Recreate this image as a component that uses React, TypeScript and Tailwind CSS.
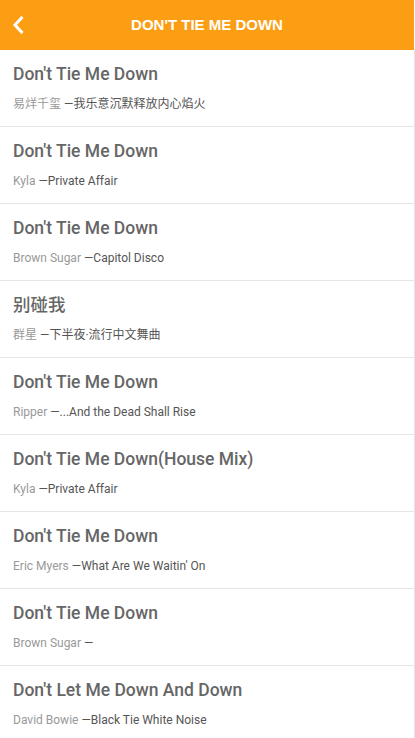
import React from "react";

const songs = [
  { t: "Don't Tie Me Down", a: "易烊千玺", al: "我乐意沉默释放内心焰火" },
  { t: "Don't Tie Me Down", a: "Kyla", al: "Private Affair" },
  { t: "Don't Tie Me Down", a: "Brown Sugar", al: "Capitol Disco" },
  { t: "别碰我", a: "群星", al: "下半夜·流行中文舞曲" },
  { t: "Don't Tie Me Down", a: "Ripper", al: "...And the Dead Shall Rise" },
  { t: "Don't Tie Me Down(House Mix)", a: "Kyla", al: "Private Affair" },
  { t: "Don't Tie Me Down", a: "Eric Myers", al: "What Are We Waitin' On" },
  { t: "Don't Tie Me Down", a: "Brown Sugar", al: "" },
  { t: "Don't Let Me Down And Down", a: "David Bowie", al: "Black Tie White Noise" },
];

export default function App() {
  return (
    <div className="w-[415px] h-[738px] overflow-hidden bg-white" style={{ fontFamily: 'Roboto, "Noto Sans CJK SC", sans-serif' }}>
      <div className="w-[414px] h-[50px] bg-[#fc9e14] flex items-center relative">
        <svg className="absolute left-[12px] top-[16px]" width="12" height="18" viewBox="0 0 12 18">
          <path d="M9.5 2 L3 9 L9.5 16" fill="none" stroke="#fff" strokeWidth="3" strokeLinecap="square" />
        </svg>
        <div className="w-full text-center text-white font-bold text-[15px]" style={{ fontFamily: '"Liberation Sans", Arial, sans-serif' }}>
          DON'T TIE ME DOWN
        </div>
      </div>
      <div>
        {songs.map((s, i) => (
          <div key={i} className="h-[77px] border-b border-r border-[#e6e6e6] pl-[13px] pt-[12px]">
            <div className="text-[17.5px] leading-[24px] font-medium text-[#666]">{s.t}</div>
            <div className="text-[12px] leading-[16px] mt-[10px] whitespace-nowrap">
              <span className="text-[#999]">{s.a} </span>
              <span className="text-[#555]">—{s.al}</span>
            </div>
          </div>
        ))}
      </div>
    </div>
  );
}
